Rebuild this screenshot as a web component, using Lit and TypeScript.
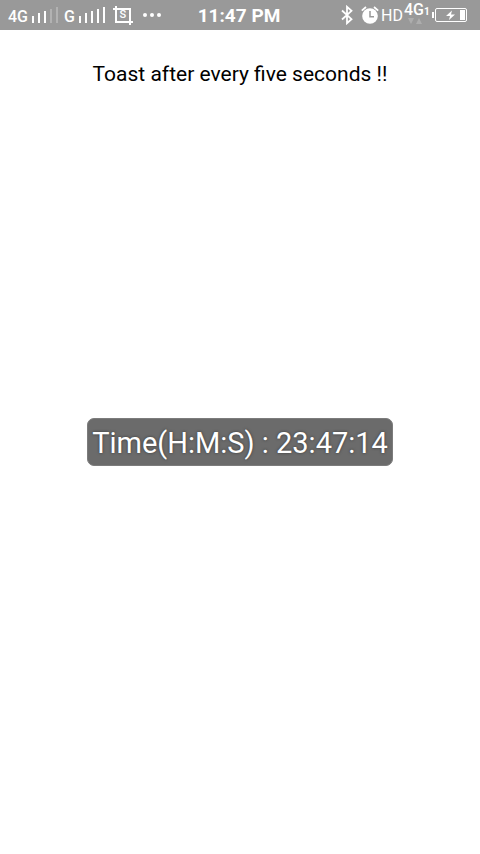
import { LitElement, html, css, svg } from "lit";
import { customElement, property } from "lit/decorators.js";

@customElement("signal-bars")
class SignalBars extends LitElement {
  @property({ type: Number }) level = 5;

  static styles = css`
    :host { display: block; height: 16px; }
    svg { display: block; fill: #fff; }
    .dim { opacity: 0.25; }
  `;

  render() {
    return html`<svg width="26" height="16" viewBox="0 0 26 16" aria-hidden="true">
      ${[7, 10, 12, 14, 16].map(
        (h, i) => svg`<rect class=${i < this.level ? "on" : "dim"} x=${i * 6} y=${16 - h} width="2" height=${h} />`
      )}
    </svg>`;
  }
}

@customElement("status-bar")
class StatusBar extends LitElement {
  static styles = css`
    :host {
      display: grid;
      grid-template-columns: 1fr auto 1fr;
      align-items: center;
      height: 30px;
      padding: 0 12px 0 8px;
      background: #999;
      color: #fff;
      font-family: Roboto, sans-serif;
    }
    svg { display: block; flex: none; }
    .side { display: flex; align-items: center; height: 30px; }
    .right { justify-content: flex-end; }
    .sim { display: flex; align-items: center; gap: 4px; margin-right: 6px; }
    .net { font-size: 16px; line-height: 16px; font-weight: 500; padding-top: 4px; }
    .crop { display: grid; place-items: center; margin: 0 10px 0 2px; }
    .crop > * { grid-area: 1 / 1; }
    .crop span { font-size: 11px; line-height: 12px; font-weight: 500; }
    .clock { font-size: 19px; line-height: 28px; font-weight: 700; white-space: nowrap; padding: 2px 0 0 2px; }
    .bt { margin-right: 8px; }
    .hd { font-size: 16px; line-height: 28px; font-weight: 400; padding: 2px 1px 0 2px; }
    .data { display: flex; flex-direction: column; height: 26px; width: 26px; }
    .rate { display: flex; align-items: baseline; font-size: 16px; line-height: 16px; font-weight: 500; }
    .rate small { font-size: 10px; line-height: 10px; font-weight: 700; }
    .arrows { margin-left: 4px; }
    .batt { margin-left: 2px; }
  `;

  render() {
    return html`
      <div class="side">
        <div class="sim"><span class="net">4G</span><signal-bars .level=${3}></signal-bars></div>
        <div class="sim"><span class="net">G</span><signal-bars></signal-bars></div>
        <div class="crop">
          <svg width="20" height="19" viewBox="0 0 20 19" fill="none" stroke="#fff" stroke-width="2" aria-hidden="true">
            <path d="M3 0V16H20M0 3H17V19" />
          </svg>
          <span>S</span>
        </div>
        <svg width="18" height="4" viewBox="0 0 18 4" fill="#fff" aria-hidden="true">
          <circle cx="2" cy="2" r="2" /><circle cx="9" cy="2" r="2" /><circle cx="16" cy="2" r="2" />
        </svg>
      </div>
      <div class="clock">11:47 PM</div>
      <div class="side right">
        <svg class="bt" width="12" height="20" viewBox="0 0 12 20" fill="none" stroke="#fff" stroke-width="1.8" aria-hidden="true">
          <path d="M1 5.5L10.5 14.2L6 18.2V1.8L10.5 5.8L1 14.5" />
        </svg>
        <svg width="18" height="18" viewBox="0 0 18 18" aria-hidden="true">
          <circle cx="9" cy="10" r="7.8" fill="#fff" />
          <path d="M.8 4.6L5 1M17.2 4.6L13 1" stroke="#fff" stroke-width="1.8" fill="none" />
          <path d="M9 5V10.7H13" stroke="#999" stroke-width="1.5" fill="none" />
        </svg>
        <span class="hd">HD</span>
        <div class="data">
          <div class="rate">4G<small>1</small></div>
          <svg class="arrows" width="14" height="6" viewBox="0 0 14 6" fill="#fff" opacity=".2" aria-hidden="true">
            <path d="M0 0H6L3 6ZM8 6H14L11 0Z" />
          </svg>
        </div>
        <svg class="batt" width="36" height="14" viewBox="0 0 36 14" aria-hidden="true">
          <rect x="0" y="4" width="2" height="6" fill="#fff" />
          <rect x="3.5" y=".5" width="31" height="13" rx="1.5" fill="none" stroke="#fff" />
          <rect x="28" y="2" width="5" height="10" fill="#fff" />
          <path d="M20 2.5L14 8H18L17 12L23 6.5H19Z" fill="#fff" />
        </svg>
      </div>
    `;
  }
}

@customElement("app-root")
class AppRoot extends LitElement {
  static styles = css`
    :host {
      display: flex;
      flex-direction: column;
      min-height: 100vh;
      background: #fff;
      font-family: Roboto, sans-serif;
    }
    main { flex: 1; display: grid; grid-template-rows: 1fr auto 1fr; justify-items: center; }
    h1 { margin: 32px 0 0; font-size: 21px; line-height: 24px; font-weight: 400; color: #000; }
    .toast {
      box-sizing: border-box;
      padding: 7px 4px 5px;
      border: 1px solid #7c7c7c;
      border-radius: 7px;
      background: #6b6b6b;
      color: #fff;
      font-size: 29px;
      line-height: 34px;
      text-shadow: 0 0 3px rgba(0, 0, 0, 0.5);
      white-space: nowrap;
    }
  `;

  render() {
    return html`
      <status-bar></status-bar>
      <main>
        <h1>Toast after every five seconds !!</h1>
        <div class="toast" role="status">Time(H:M:S) : 23:47:14</div>
      </main>
    `;
  }
}
